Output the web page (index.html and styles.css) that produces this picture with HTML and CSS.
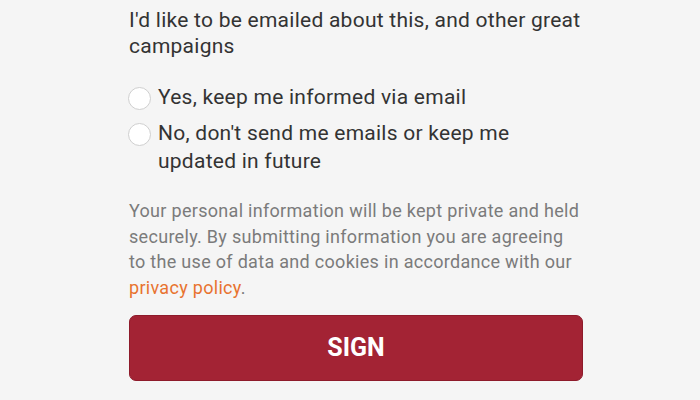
FILE: index.html
```html
<!DOCTYPE html>
<html lang="en">
<head>
<meta charset="utf-8">
<link rel="stylesheet" href="styles.css">
</head>
<body>
<main class="form">
  <p class="question">I'd like to be emailed about this, and other great campaigns</p>
  <div class="options">
    <label class="option"><span class="radio"></span><span class="option-text">Yes, keep me informed via email</span></label>
    <label class="option"><span class="radio"></span><span class="option-text">No, don't send me emails or keep me updated in future</span></label>
  </div>
  <p class="privacy">Your personal information will be kept private and held securely. By submitting information you are agreeing to the use of data and cookies in accordance with our <a class="link" href="#">privacy policy</a>.</p>
  <button class="sign" type="button">SIGN</button>
</main>
</body>
</html>
```

FILE: styles.css
```css
html, body {
  margin: 0;
  padding: 0;
  background: #f5f5f5;
}
body {
  font-family: Roboto, "Liberation Sans", sans-serif;
  color: #333333;
}
.form {
  width: 456px;
  margin-left: 129px;
  padding-top: 7px;
  display: flex;
  flex-direction: column;
}
.question {
  margin: 0;
  font-size: 21px;
  letter-spacing: 0.25px;
  line-height: 26px;
}
.options {
  margin-top: 24px;
  display: flex;
  flex-direction: column;
  gap: 8px;
}
.option {
  display: flex;
  align-items: flex-start;
  gap: 7px;
  font-size: 21px;
  letter-spacing: 0.25px;
  line-height: 28px;
}
.radio {
  flex: none;
  width: 21px;
  height: 21px;
  border: 1px solid #cfcfcf;
  border-radius: 50%;
  background: #ffffff;
  margin-top: 4px;
  margin-left: -1px;
}
.option-text {
  flex: 1;
}
.privacy {
  margin: 23px 0 0;
  width: 452px;
  font-size: 18px;
  letter-spacing: 0.3px;
  line-height: 25.7px;
  color: #7b7b7b;
}
.link {
  color: #e8732f;
  text-decoration: none;
}
.sign {
  margin-top: 14px;
  width: 454px;
  height: 66px;
  border: 1px solid #8e1b2b;
  border-radius: 7px;
  background: #a32334;
  color: #ffffff;
  font-family: Roboto, "Liberation Sans", sans-serif;
  font-weight: 700;
  font-size: 25px;
  cursor: pointer;
}
```
